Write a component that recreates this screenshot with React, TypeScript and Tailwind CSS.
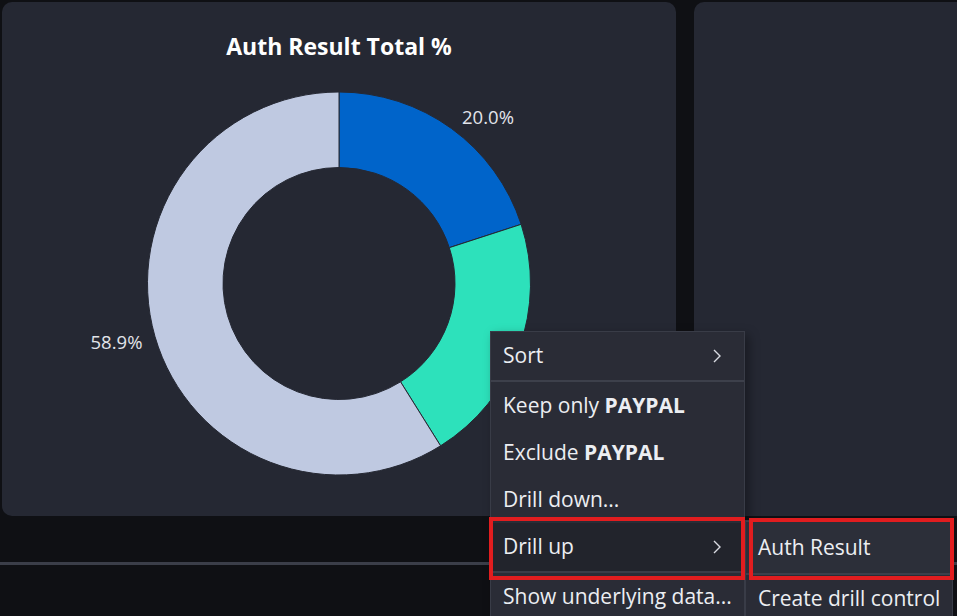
import React from "react";

const FONT = { fontFamily: '"Open Sans", "Noto Sans", sans-serif' };

interface Slice {
  label: string;
  value: number;
  color: string;
  pos?: [number, number];
}

// green slice label sits under the context menu, so it is not drawn
const slices: Slice[] = [
  { label: "20.0%", value: 20.0, color: "#0064ca", pos: [486, 61] },
  { label: "21.1%", value: 21.1, color: "#2de1bb" },
  { label: "58.9%", value: 58.9, color: "#bfc9e1", pos: [114.5, 286] },
];

const CX = 337;
const CY = 220.5;
const R_IN = 116;
const R_OUT = 191.5;

function pt(r: number, deg: number): [number, number] {
  const a = (deg * Math.PI) / 180;
  return [CX + r * Math.sin(a), CY - r * Math.cos(a)];
}

function arcPath(a0: number, a1: number) {
  const large = a1 - a0 > 180 ? 1 : 0;
  const [x0, y0] = pt(R_OUT, a0);
  const [x1, y1] = pt(R_OUT, a1);
  const [x2, y2] = pt(R_IN, a1);
  const [x3, y3] = pt(R_IN, a0);
  return `M${x0} ${y0} A${R_OUT} ${R_OUT} 0 ${large} 1 ${x1} ${y1} L${x2} ${y2} A${R_IN} ${R_IN} 0 ${large} 0 ${x3} ${y3} Z`;
}

function Donut() {
  let start = 0;
  return (
    <svg width={674} height={453} viewBox="0 0 674 453" className="block">
      {slices.map((s) => {
        const a0 = start;
        const a1 = start + (s.value / 100) * 360;
        start = a1;
        return (
          <path
            key={s.label}
            d={arcPath(a0, a1)}
            fill={s.color}
            stroke="#252833"
            strokeWidth={1}
          />
        );
      })}
      {slices.map((s) =>
        s.pos ? (
          <text
            key={s.label + "-t"}
            x={s.pos[0]}
            y={s.pos[1]}
            textAnchor="middle"
            fill="#e2e4ea"
            fontSize={18.5}
            style={FONT}
          >
            {s.label}
          </text>
        ) : null
      )}
    </svg>
  );
}

function Chevron() {
  return (
    <svg width="10" height="16" viewBox="0 0 10 16" fill="none">
      <path d="M2 2 L8 8 L2 14" stroke="#d9dbe2" strokeWidth="1.4" />
    </svg>
  );
}

export default function App() {
  return (
    <div
      className="relative w-[957px] h-[616px] overflow-hidden bg-[#0f1014] text-[#eceef2]"
      style={FONT}
    >
      {/* Cards row */}
      <div className="flex gap-[18px] pt-[2px] pl-[2px]">
        <div className="w-[674px] h-[514px] rounded-[10px] bg-[#252833] flex flex-col">
          <div className="pt-[30px] h-[61px] text-center text-[23px] leading-[28px] font-bold text-white">
            Auth Result Total %
          </div>
          <Donut />
        </div>
        <div className="flex-1 h-[514px] rounded-l-[10px] bg-[#252833]" />
      </div>

      {/* Bottom divider */}
      <div className="mt-[46px] h-[3px] bg-[#3b3e49]" />

      {/* Context menu */}
      <div className="absolute left-[490px] top-[331px] w-[255px] bg-[#2a2c36] border border-[#393c47] shadow-[4px_4px_10px_rgba(0,0,0,0.35)] text-[21px] text-[#eceef2]">
        <div className="h-[48px] flex items-center justify-between pl-[12px] pr-[22px]">
          <span>Sort</span>
          <Chevron />
        </div>
        <div className="h-[2px] bg-[#3d404b]" />
        <div className="h-[47px] flex items-center pl-[12px]">
          <span>
            Keep only <b>PAYPAL</b>
          </span>
        </div>
        <div className="h-[47px] flex items-center pl-[12px]">
          <span>
            Exclude <b>PAYPAL</b>
          </span>
        </div>
        <div className="h-[47px] flex items-center pl-[12px]">
          <span>Drill down...</span>
        </div>
        <div className="h-[48px] flex items-center justify-between pl-[12px] pr-[22px] bg-[#22242c]">
          <span>Drill up</span>
          <Chevron />
        </div>
        <div className="h-[2px] bg-[#3a3d48]" />
        <div className="h-[47px] flex items-center pl-[12px] whitespace-nowrap">
          <span>Show underlying data...</span>
        </div>
      </div>

      {/* Submenu */}
      <div className="absolute left-[745px] top-[520px] w-[208px] bg-[#2a2c36] border border-[#393c47] text-[21px] text-[#eceef2]">
        <div className="h-[52px] flex items-center pl-[12px] bg-[#2c2f39] border-t border-[#3d404b]">
          <span>Auth Result</span>
        </div>
        <div className="h-[2px] bg-[#3d404b]" />
        <div className="h-[47px] flex items-center pl-[12px] whitespace-nowrap">
          <span>Create drill control</span>
        </div>
      </div>

      {/* Highlight boxes */}
      <div className="absolute left-[489px] top-[517px] w-[256px] h-[63px] border-4 border-[#e11d1f] pointer-events-none" />
      <div className="absolute left-[749px] top-[518px] w-[205px] h-[62px] border-4 border-[#e11d1f] pointer-events-none" />
    </div>
  );
}
